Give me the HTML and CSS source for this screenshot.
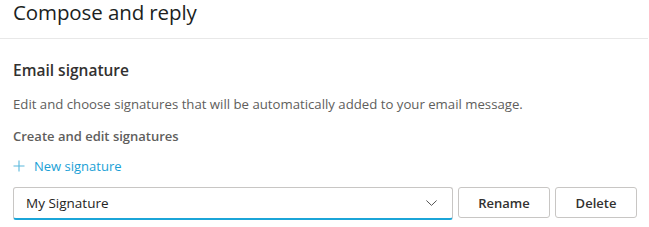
FILE: index.html
```html
<!DOCTYPE html>
<html>
<head>
<meta charset="utf-8">
<link rel="stylesheet" href="styles.css">
</head>
<body>
<header class="page-head">
  <h1 class="title">Compose and reply</h1>
</header>
<section class="section">
  <h2 class="section-title">Email signature</h2>
  <p class="desc">Edit and choose signatures that will be automatically added to your email message.</p>
  <h3 class="sub">Create and edit signatures</h3>
  <button class="new-btn">
    <svg class="plus" width="12" height="12" viewBox="0 0 12 12"><path d="M6 0.5V11.5M0.5 6H11.5" stroke="currentColor" stroke-width="1.1" fill="none"/></svg>
    <span>New signature</span>
  </button>
  <div class="controls">
    <div class="select">
      <span>My Signature</span>
      <svg class="chev" width="11" height="6" viewBox="0 0 11 6"><path d="M0.4 0.5L5.5 5.4L10.6 0.5" stroke="#555" stroke-width="1" fill="none"/></svg>
    </div>
    <button class="btn">Rename</button>
    <button class="btn">Delete</button>
  </div>
</section>
</body>
</html>
```
FILE: styles.css
```css
html, body {
  margin: 0;
  padding: 0;
  background: #fff;
  font-family: "Open Sans", "Noto Sans", sans-serif;
  color: #252423;
}
.page-head {
  height: 38px;
  border-bottom: 1px solid #e8e8e8;
  padding: 0 13px;
  margin-right: 1px;
}
.title {
  margin: 0;
  font-size: 20.5px;
  font-weight: 500;
  line-height: 24px;
  letter-spacing: -0.1px;
  color: #201f1e;
}
.section {
  padding: 20px 13px 0;
}
.section-title {
  margin: 0;
  font-size: 15.5px;
  font-weight: 600;
  line-height: 22px;
  color: #323130;
}
.desc {
  margin: 14px 0 0;
  font-size: 13.2px;
  line-height: 18px;
  color: #605e5c;
}
.sub {
  margin: 14px 0 0;
  font-size: 13px;
  font-weight: 600;
  line-height: 18px;
  color: #605e5c;
}
.new-btn {
  display: flex;
  align-items: center;
  gap: 9px;
  margin: 12px 0 0;
  padding: 0;
  border: 0;
  background: none;
  font-family: inherit;
  font-size: 13px;
  line-height: 18px;
  color: #1a9fd6;
}
.plus { color: #5ab8dc; }
.controls {
  display: flex;
  gap: 5px;
  margin-top: 12px;
  width: 624px;
}
.select {
  box-sizing: border-box;
  width: 440px;
  height: 33px;
  border: 1px solid #c8c6c4;
  border-bottom: 2px solid #1ba5d8;
  border-radius: 3px;
  display: flex;
  align-items: center;
  justify-content: space-between;
  padding: 0 15px 0 12px;
  font-size: 13.5px;
  color: #252423;
}
.btn {
  box-sizing: border-box;
  height: 31px;
  border: 1px solid #c8c6c4;
  border-radius: 3px;
  background: #fff;
  font-family: inherit;
  font-size: 13px;
  font-weight: 600;
  color: #323130;
  padding: 0;
}
.btn:nth-of-type(1) { width: 92px; }
.btn:nth-of-type(2) { width: 82px; }
```
